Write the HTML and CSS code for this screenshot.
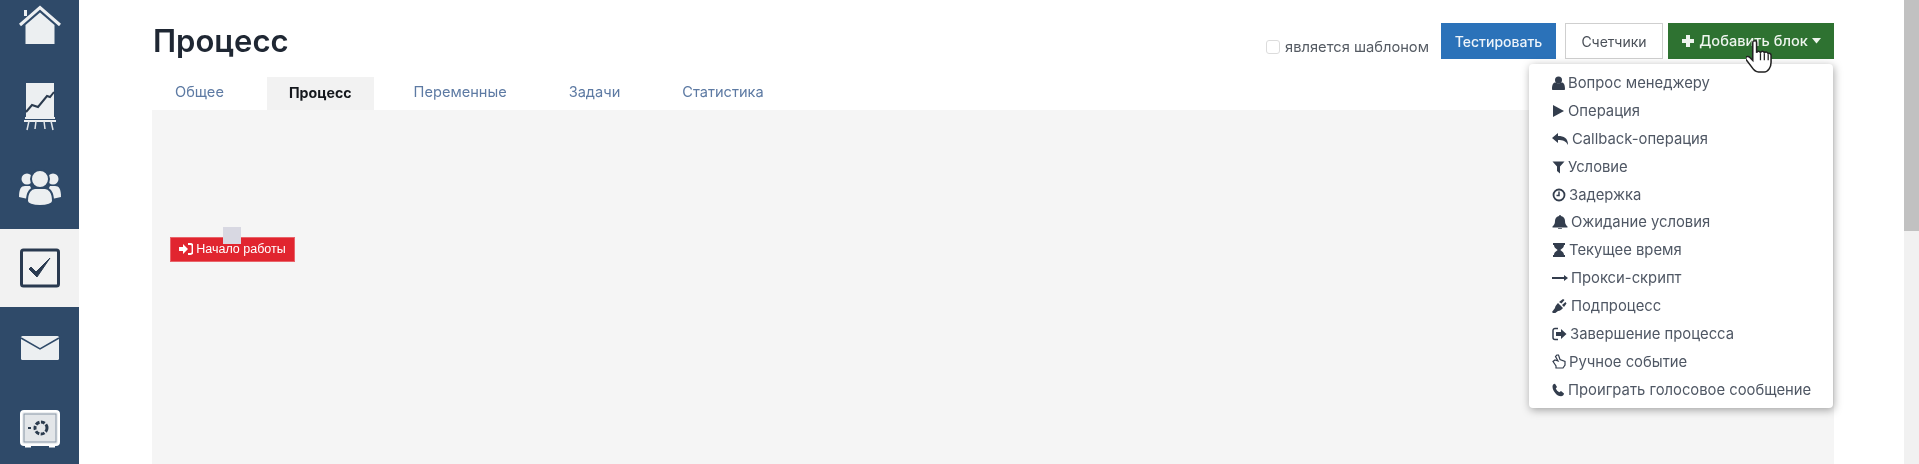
FILE: index.html
```html
<!DOCTYPE html>
<html lang="ru">
<head>
    <meta charset="UTF-8">
    <title>Процесс</title>
    <link rel="stylesheet" href="styles.css">
</head>
<body>

    <!-- Left menu -->
    <nav class="sidebar">
        <a class="side-item">
            <svg class="home-icon" width="48" height="48" viewBox="0 0 48 48">
                <path d="M4 21 24 3.500 44 21" fill="none" stroke="#eceff1" stroke-width="3"/>
                <path d="M8 6h3v6H8z" fill="#eceff1"/>
                <path d="M9.500 21 24 8.500 38.500 21v19h-29z" fill="#eceff1"/>
            </svg>
        </a>
        <a class="side-item">
            <svg width="48" height="52" viewBox="0 0 48 52">
                <path d="M10 2h28v34H10z" fill="#eceff1"/>
                <path d="M10 31l6-7 6 2 9-11 3 1 4-5" fill="none" stroke="#2b3b4e" stroke-width="2"/>
                <path d="M9 37h30M8 40h32" stroke="#eceff1" stroke-width="2"/>
                <path d="M13 40l-2 9M35 40l2 9M20 40l-1 8M28 40l1 8" stroke="#dfe4e8" stroke-width="1.500"/>
            </svg>
        </a>
        <a class="side-item">
            <svg width="44" height="38" viewBox="0 0 44 38">
                <circle cx="9" cy="10" r="5.500" fill="#eceff1"/>
                <circle cx="35" cy="10" r="5.500" fill="#eceff1"/>
                <path d="M1 28c0-8 2-11 6-11h5l3 6-5 7z" fill="#eceff1"/>
                <path d="M43 28c0-8-2-11-6-11h-5l-3 6 5 7z" fill="#eceff1"/>
                <circle cx="22" cy="10" r="9" stroke="#2f4a69" stroke-width="2" fill="#eceff1"/>
                <path d="M9 32c0-9 4-13 8-13h10c4 0 8 4 8 13 0 3-6 5-13 5s-13-2-13-5z" stroke="#2f4a69" stroke-width="2" fill="#eceff1"/>
            </svg>
        </a>
        <a class="side-item active">
            <svg width="42" height="42" viewBox="0 0 42 42">
                <rect x="2.500" y="3" width="37" height="36" rx="2" fill="none" stroke="#2a3a50" stroke-width="3"/>
                <path d="M10 22l2-2 5 5L31 11l-13 19z" fill="#2a3a50" stroke="#2a3a50" stroke-width="1" stroke-linejoin="round"/>
            </svg>
        </a>
        <a class="side-item">
            <svg width="40" height="26" viewBox="0 0 40 26">
                <rect x="1" y="1" width="38" height="24" rx="1.500" fill="#eceff1"/>
                <path d="M1 3l19 11L39 3" fill="none" stroke="#2f4a69" stroke-width="1.500"/>
            </svg>
        </a>
        <a class="side-item">
            <svg width="42" height="40" viewBox="0 0 42 40">
                <rect x="2" y="2" width="38" height="34" rx="3" fill="#eceff1" stroke="#fff" stroke-width="2"/>
                <rect x="5" y="5" width="32" height="28" fill="#e3e6e9" stroke="#8796a6"/>
                <circle cx="22" cy="19" r="6" fill="none" stroke="#2b3b4e" stroke-width="3" stroke-dasharray="4 1.500"/>
                <path d="M9 19h3" stroke="#2b3b4e" stroke-width="2"/>
                <path d="M6 37h6M30 37h6" stroke="#fff" stroke-width="3"/>
            </svg>
        </a>
    </nav>

    <main class="main">
        <div class="top-row">
            <h1 class="title">Процесс</h1>
            <label class="template-check"><span class="checkbox"></span>является шаблоном</label>
            <button class="btn btn-blue">Тестировать</button>
            <button class="btn btn-white">Счетчики</button>
            <button class="btn btn-green">
                <svg width="14" height="14" viewBox="0 0 14 14"><path d="M5 1h4v4h4v4H9v4H5V9H1V5h4z" fill="#eef5ee"/></svg>
                Добавить блок
                <svg width="9" height="6" viewBox="0 0 9 6"><path d="M0 0h9L4.500 5.500z" fill="#eef5ee"/></svg>
            </button>
        </div>

        <div class="tabs">
            <a class="tab">Общее</a>
            <a class="tab current">Процесс</a>
            <a class="tab">Переменные</a>
            <a class="tab">Задачи</a>
            <a class="tab">Статистика</a>
        </div>

        <div class="canvas">
            <div class="start-node">
                <span class="node-handle"></span>
                <svg width="14" height="12" viewBox="0 0 14 12"><path d="M0 4h4V1l5 5-5 5V8H0z" fill="#fff"/><path d="M9 1h2.500A2 2 0 0 1 13.500 3v6a2 2 0 0 1-2 2H9" fill="none" stroke="#fff" stroke-width="1.800"/></svg>
                Начало работы
            </div>
        </div>

        <!-- Add block dropdown -->
        <ul class="dropdown">
            <li>
                <svg width="13" height="14" viewBox="0 0 13 14"><circle cx="6.500" cy="4" r="3.500"/><path d="M0 13c0-5 1.500-6.500 3.500-6.500 1 1 5 1 6 0 2 0 3.500 1.500 3.500 6.500 0 .6-.4 1-1 1H1c-.6 0-1-.4-1-1z"/></svg>
                Вопрос менеджеру
            </li>
            <li>
                <svg width="13" height="14" viewBox="0 0 13 14"><path d="M1 1l11 6-11 6z"/></svg>
                Операция
            </li>
            <li>
                <svg width="17" height="14" viewBox="0 0 17 14"><path d="M0 6l6-5v3c6 0 10 2 10 9-2-4-5-5-10-5v3z"/></svg>
                Callback-операция
            </li>
            <li>
                <svg width="13" height="14" viewBox="0 0 13 14"><path d="M.5 1.500h12l-4.500 5v7l-3-2.500V6.500z"/></svg>
                Условие
            </li>
            <li>
                <svg width="14" height="14" viewBox="0 0 14 14"><circle cx="7" cy="7" r="5.500" fill="none" stroke="#333d4d" stroke-width="1.800"/><path d="M7 3.500V7.500H4.500" fill="none" stroke="#333d4d" stroke-width="1.500"/></svg>
                Задержка
            </li>
            <li>
                <svg width="16" height="14" viewBox="0 0 16 14"><path d="M8 0c1 0 1 1 1 1 3 .5 4 3 4 5 0 3 1 4 2.500 5.500v1H.500v-1C2 10 3 9 3 6c0-2 1-4.500 4-5 0 0 0-1 1-1z"/><path d="M6 13.200h4a2 1.500 0 0 1-4 0z"/></svg>
                Ожидание условия
            </li>
            <li>
                <svg width="14" height="14" viewBox="0 0 14 14"><path d="M1 0h12v2h-1c0 3-3 4-3.500 5C9 8 12 9 12 12h1v2H1v-2h1c0-3 3-4 3.500-5C5 6 2 5 2 2H1z"/></svg>
                Текущее время
            </li>
            <li>
                <svg width="16" height="14" viewBox="0 0 16 14"><path d="M0 6h12V4l4 3-4 3V8H0z"/></svg>
                Прокси-скрипт
            </li>
            <li>
                <svg width="16" height="14" viewBox="0 0 16 14"><path d="M3 9c0-2 2-4 3-5l5 5c-1 1-3 3-5 3L2 15 0 13zM7 3l4-3 1.500 1-3 3.500zM10 6l3.500-3 1 1.500L12 8z"/></svg>
                Подпроцесс
            </li>
            <li>
                <svg width="15" height="14" viewBox="0 0 15 14"><path d="M6 1.500H3A2 2 0 0 0 1 3.500v7a2 2 0 0 0 2 2h3" fill="none" stroke="#333d4d" stroke-width="1.500"/><path d="M4 5h5V2l5.500 5L9 12V9H4z"/></svg>
                Завершение процесса
            </li>
            <li>
                <svg width="14" height="15" viewBox="0 0 14 15"><path d="M5 1 3.500 2.500 6 7 3 6 1 7.500 4 12v2h7l2-3V7.500L8 5.500 6.500 1z" fill="none" stroke="#333d4d" stroke-width="1.200"/></svg>
                Ручное событие
            </li>
            <li>
                <svg width="13" height="14" viewBox="0 0 13 14"><path d="M3 .800 5 4 3.800 5.500c.5 1.500 2 3 3.500 3.700L9 8l3 2.500c0 1.500-1.500 2.800-3 2.800C5 13.300.500 8 .500 3.500.500 2 1.500 1 3 .800z"/></svg>
                Проиграть голосовое сообщение
            </li>
        </ul>

        <!-- Mouse pointer -->
        <svg class="cursor" width="27" height="35" viewBox="0 0 28 36">
            <path d="M8 2c2-1 3 0 3 2v10c1-2 3-2 4 0 1-2 3-2 4 0 1-1 3-1 4 1 1-1 3 0 3 2v7c0 5-3 10-7 10h-6c-3 0-5-2-7-5l-6-8c-1-3 2-4 4-2l3 3V4c0-1 0-2 1-2z" fill="#fff" stroke="#222" stroke-width="1.600"/>
            <path d="M15 15v7M19 15v7M23 16v6" stroke="#222" stroke-width="1.300"/>
        </svg>
    </main>

    <div class="scrollbar"><div class="scroll-thumb"></div></div>

</body>
</html>
```

FILE: styles.css
```css
html, body {
    height: 100%;
}

body {
    margin: 0;
    display: flex;
    overflow: hidden;
    background: white;
    font-family: Inter, "Open Sans", sans-serif;
    color: #3d4654;
    filter: blur(0.4px);
}

.sidebar {
    width: 79px;
    flex-shrink: 0;
    background-color: #2f4a69;
    margin-top: -15px;
    display: flex;
    flex-direction: column;
}

.side-item {
    height: 81px;
    flex-shrink: 0;
    display: flex;
    align-items: center;
    justify-content: center;
}

.side-item.active {
    height: 78px;
    margin-top: 1px;
    background-color: #f2f2f2;
}

.home-icon {
    margin-top: 5px;
}

.main {
    flex: 1;
    position: relative;
    padding-left: 73px;
    padding-right: 70px;
    min-width: 0;
}

.top-row {
    height: 77px;
    display: flex;
    align-items: flex-start;
}

.title {
    margin: 23px auto 0 1px;
    font-size: 31px;
    line-height: 36px;
    font-weight: 600;
    color: #1f2733;
}

.template-check {
    margin-top: 38px;
    margin-right: 12px;
    display: flex;
    align-items: center;
    gap: 5px;
    font-size: 14.700px;
    line-height: 18px;
    color: #555b63;
}

.checkbox {
    width: 12px;
    height: 12px;
    border: 1px solid #dcdcdc;
    border-radius: 3px;
    background: white;
}

.btn {
    margin: 23px 0 0 9px;
    height: 36px;
    padding: 0;
    border: none;
    font-family: inherit;
    font-size: 14px;
}

.btn-blue {
    width: 115px;
    margin-left: 0;
    background-color: #2b72b9;
    color: #eef4fa;
    font-weight: 500;
}

.btn-white {
    width: 98px;
    background: white;
    border: 1px solid #cfcfcf;
    color: #4a5058;
}

.btn-green {
    width: 166px;
    margin-left: 5px;
    background-color: #2e7231;
    color: #eef5ee;
    font-size: 14.600px;
    font-weight: 500;
    display: flex;
    align-items: center;
    justify-content: center;
    gap: 4px;
}

.tabs {
    height: 33px;
    padding-left: 1px;
    display: flex;
    gap: 18px;
}

.tab {
    padding: 0 22px;
    font-size: 14.600px;
    line-height: 31px;
    color: #5d7aa3;
}

.tab:first-child {
    padding-right: 25px;
}

.tab.current {
    background-color: #f2f2f2;
    color: #15181d;
    font-size: 14.200px;
    font-weight: 700;
}

.canvas {
    height: 354px;
    position: relative;
    background-color: #f5f5f5;
}

.start-node {
    position: absolute;
    left: 18px;
    top: 127px;
    width: 125px;
    height: 25px;
    box-sizing: border-box;
    padding-bottom: 2px;
    background-color: #e1252f;
    border: 1px solid #e9646b;
    display: flex;
    align-items: center;
    justify-content: center;
    gap: 3px;
    font-family: "Liberation Sans", Arial, sans-serif;
    font-size: 12.500px;
    color: white;
}

.node-handle {
    position: absolute;
    left: 52px;
    top: -11px;
    width: 18px;
    height: 17px;
    background-color: #d8d8e2;
}

.dropdown {
    position: absolute;
    left: 1450px;
    top: 64px;
    width: 304px;
    box-sizing: border-box;
    margin: 0;
    padding: 5px 0 4px 23px;
    list-style: none;
    background: white;
    border-radius: 4px;
    box-shadow: 1px 2px 8px rgba(0, 0, 0, 0.35);
}

.dropdown li {
    height: 27.900px;
    display: flex;
    align-items: center;
    gap: 3px;
    font-size: 14.800px;
    color: #4f5764;
}

.dropdown svg {
    fill: #333d4d;
    flex-shrink: 0;
}

.cursor {
    position: absolute;
    left: 1667px;
    top: 39px;
}

.scrollbar {
    width: 15px;
    flex-shrink: 0;
    background-color: #f1f1f1;
}

.scroll-thumb {
    height: 231px;
    background-color: #c1c1c1;
}
```
